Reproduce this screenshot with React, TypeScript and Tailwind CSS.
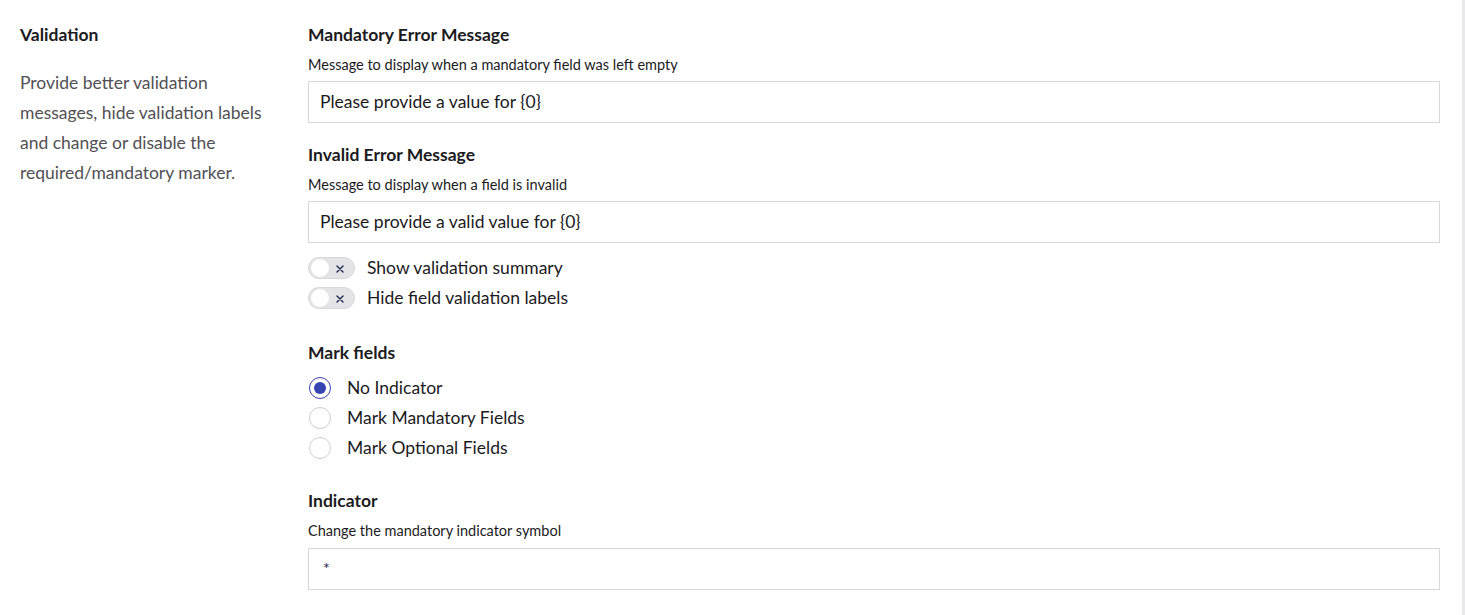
const Toggle = ({ label }: { label: string }) => (
  <div className="flex items-center h-[22px]">
    <span className="relative w-[47px] h-[22px] rounded-full bg-[#e4e4e6] border border-[#d8d7d9] shrink-0">
      <span className="absolute left-[2px] top-[1px] w-[18px] h-[18px] rounded-full bg-white" />
      <svg className="absolute right-[9px] top-[6px]" width="10" height="10" viewBox="0 0 10 10">
        <path d="M2 2 L8 8 M8 2 L2 8" stroke="#1b264f" strokeWidth="1.4" strokeLinecap="round" />
      </svg>
    </span>
    <span className="ml-[12px] text-[17.5px] text-[#1b1b1d]">{label}</span>
  </div>
);

const Radio = ({ label, checked }: { label: string; checked?: boolean }) => (
  <div className="flex items-center h-[30px]">
    <span
      className={
        checked
          ? "w-[22px] h-[22px] rounded-full border-[1.5px] border-[#3544b1] flex items-center justify-center bg-white shrink-0"
          : "w-[22px] h-[22px] rounded-full border border-[#cfced1] bg-white shrink-0"
      }
    >
      {checked && <span className="w-[12px] h-[12px] rounded-full bg-[#3544b1]" />}
    </span>
    <span className="ml-[16px] text-[17.5px] text-[#1b1b1d]">{label}</span>
  </div>
);

const TextInput = ({ value, small }: { value: string; small?: boolean }) => (
  <div className="h-[42px] border border-[#d8d7d9] bg-white flex items-center pl-[11px]">
    <span className={small ? "text-[16px] text-[#1b264f] -mt-[2px] pl-[3px]" : "text-[17.5px] text-[#1b1b1d]"}>
      {value}
    </span>
  </div>
);

const Heading = ({ children }: { children: string }) => (
  <div className="text-[17.5px] leading-[20px] font-bold text-[#1b1b1d]">{children}</div>
);

const Sub = ({ children }: { children: string }) => (
  <div className="text-[14.5px] leading-[20px] text-[#1b1b1d] mt-[10px] mb-[6px]">{children}</div>
);

export default function App() {
  return (
    <div
      className="w-[1465px] h-[615px] bg-white flex overflow-hidden"
      style={{ fontFamily: "Lato, 'Open Sans', sans-serif" }}
    >
      <div className="w-[1462px] flex">
        <div className="w-[308px] pl-5 pt-[25px] shrink-0">
          <div className="text-[17.5px] leading-[20px] font-bold text-[#1b1b1d]">Validation</div>
          <p className="w-[255px] mt-[23px] text-[17.5px] leading-[30px] text-[#515054]">
            Provide better validation messages, hide validation labels and change or disable the
            required/mandatory marker.
          </p>
        </div>
        <div className="flex-1 pt-[25px] pr-[22px]">
          <Heading>Mandatory Error Message</Heading>
          <Sub>Message to display when a mandatory field was left empty</Sub>
          <TextInput value="Please provide a value for {0}" />

          <div className="mt-[22px]">
            <Heading>Invalid Error Message</Heading>
          </div>
          <Sub>Message to display when a field is invalid</Sub>
          <TextInput value="Please provide a valid value for {0}" />

          <div className="mt-[14px] flex flex-col gap-[8px]">
            <Toggle label="Show validation summary" />
            <Toggle label="Hide field validation labels" />
          </div>

          <div className="mt-[34px]">
            <Heading>Mark fields</Heading>
          </div>
          <div className="mt-[10px] pl-[1px]">
            <Radio label="No Indicator" checked />
            <Radio label="Mark Mandatory Fields" />
            <Radio label="Mark Optional Fields" />
          </div>

          <div className="mt-[28px]">
            <Heading>Indicator</Heading>
          </div>
          <div className="text-[14.5px] leading-[20px] text-[#1b1b1d] mt-[10px] mb-[7px]">
            Change the mandatory indicator symbol
          </div>
          <TextInput value="*" small />
        </div>
      </div>
      <div className="w-[3px] h-full bg-[#e9e9eb]" />
    </div>
  );
}
